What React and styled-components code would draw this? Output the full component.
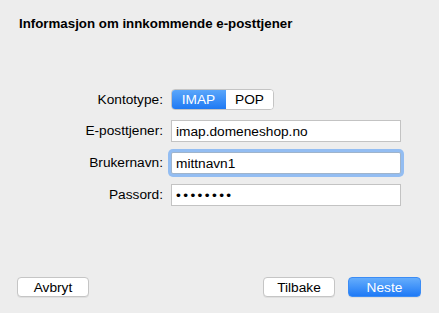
import styled, { createGlobalStyle } from 'styled-components'

const GlobalStyle = createGlobalStyle`
  html, body {
    margin: 0;
    padding: 0;
    background: #ededed;
  }
  body {
    font-family: "Helvetica Neue", "Liberation Sans", Arial, sans-serif;
    font-size: 13.7px;
    color: #000;
  }
`

const Window = styled.div`
  width: 439px;
  height: 313px;
  display: flex;
  flex-direction: column;
  box-sizing: border-box;
  padding: 16px 18px 16px 17px;
`

const Title = styled.h1`
  margin: 0 0 0 2px;
  font-size: 13.3px;
  font-weight: 700;
  line-height: 16px;
`

const Form = styled.div`
  margin-top: 57px;
  display: grid;
  grid-template-columns: 146px 230px;
  column-gap: 8px;
  row-gap: 10px;
  align-items: center;
`

const Label = styled.label`
  justify-self: end;
  line-height: 16px;
`

const Segmented = styled.div`
  display: flex;
  width: 103px;
  height: 21px;
  box-sizing: border-box;
  border: 1px solid #c4c4c4;
  border-radius: 4px;
  overflow: hidden;
  background: #fff;
`

const Segment = styled.div`
  flex: ${p => (p.$active ? '0 0 55px' : '1')};
  display: flex;
  align-items: center;
  justify-content: center;
  color: ${p => (p.$active ? '#fff' : '#000')};
  background: ${p => (p.$active ? 'linear-gradient(#5ea9fb, #1c77f3)' : '#fff')};
  margin: ${p => (p.$active ? '-1px 0 -1px -1px' : '0')};
`

const Field = styled.input`
  width: 230px;
  height: 22px;
  box-sizing: border-box;
  border: 1px solid ${p => (p.$focused ? '#9fb4cc' : '#c3c3c3')};
  background: #fff;
  padding: 0 4px;
  margin: 0;
  font: inherit;
  color: #000;
  outline: none;
  border-radius: ${p => (p.$focused ? '2px' : '0')};
  letter-spacing: ${p => (p.type === 'password' ? '2.4px' : 'normal')};
  box-shadow: ${p => (p.$focused ? '0 0 0 3px #93bdf2' : 'none')};
`

const Footer = styled.div`
  margin-top: auto;
  display: flex;
  align-items: center;
  gap: 13px;
`

const Spacer = styled.div`
  flex: 1;
`

const Button = styled.button`
  width: ${p => p.$w}px;
  height: 20px;
  box-sizing: border-box;
  padding: 0;
  font: inherit;
  border-radius: 4px;
  border: 1px solid ${p => (p.$primary ? '#3b8cf5' : '#c5c5c5')};
  color: ${p => (p.$primary ? '#fff' : '#000')};
  background: ${p => (p.$primary ? 'linear-gradient(#65adfc, #1f7af6)' : '#fff')};
  box-shadow: 0 1px 0 rgba(0, 0, 0, 0.06);
`

export default function App() {
  return (
    <>
      <GlobalStyle />
      <Window>
        <Title>Informasjon om innkommende e-posttjener</Title>
        <Form>
          <Label>Kontotype:</Label>
          <Segmented>
            <Segment $active>IMAP</Segment>
            <Segment>POP</Segment>
          </Segmented>
          <Label>E-posttjener:</Label>
          <Field readOnly defaultValue="imap.domeneshop.no" />
          <Label>Brukernavn:</Label>
          <Field readOnly $focused defaultValue="mittnavn1" />
          <Label>Passord:</Label>
          <Field readOnly type="password" defaultValue="passord1" />
        </Form>
        <Footer>
          <Button $w={72}>Avbryt</Button>
          <Spacer />
          <Button $w={72}>Tilbake</Button>
          <Button $w={73} $primary>Neste</Button>
        </Footer>
      </Window>
    </>
  )
}
